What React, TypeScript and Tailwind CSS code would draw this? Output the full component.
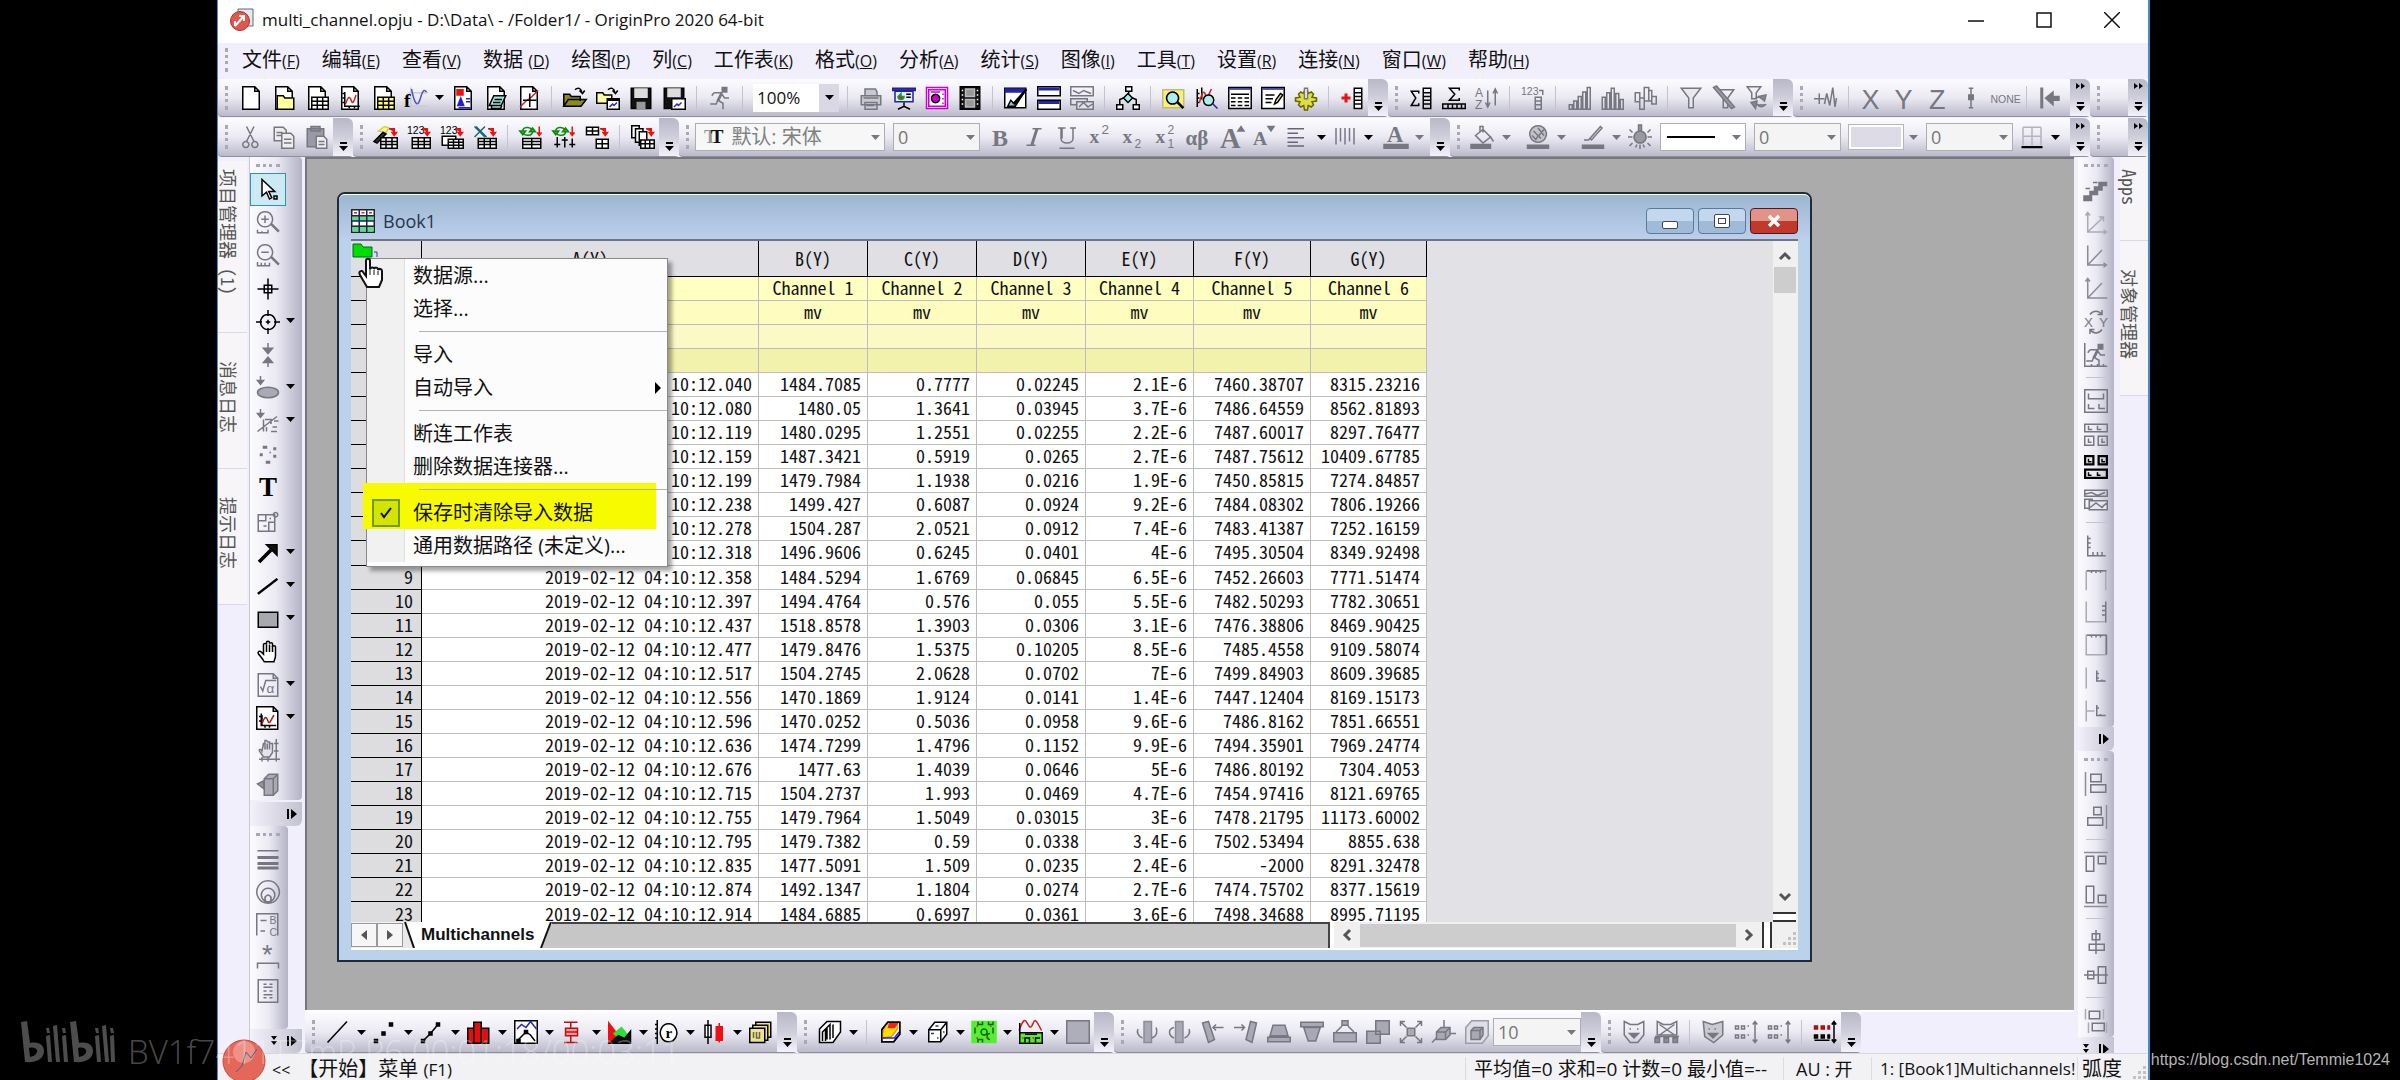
import { Fragment, type ReactNode } from 'react'
import clsx from 'clsx'

// One toolbar drawing on a 16x16 grid: paths are [d, fill, stroke], labels are { t, x, y, s }
type Shape = [string, string?, string?] | { t: string; x: number; y: number; s: number; serif?: boolean }

const PAGE: Shape = ['M2.5 .5h8l3 3v12h-11zM10.5 .5v3h3', '#fff']
const GRID = 'M4.5 7.5h11v8h-11zM4.5 10.2h11M4.5 12.8h11M8.2 7.5v8M11.8 7.5v8'
const ARROW_RED: Shape = ['M10 2.5h3.500v2.500M12 5l1.500 2 1.500-2z', '#e11', '#e11']
const RUNNER: Shape[] = [
  ['M9.5 1h3v3h-3z', 'currentColor'],
  ['M4 4.5h5l-2.5 5 3.5 2v4M9 5l2 3h3M6.5 9.5l-1 2.5h-4M4 4.5l-1.5 2M8.5 5l-2.5 5M9.5 5l-2.5 5'],
]
const CUBE = 'M2.5 6.5l4-5h8v8l-4 5h-8z'

const icons: Record<string, Shape[]> = {
  newProject: [PAGE],
  newFolder: [PAGE, ['M3.5 15.5v-9h4l1 1.5h6v7.5z', '#ffffa0']],
  newBook: [PAGE, [GRID, '#fff']],
  newGraph: [PAGE, ['M4.5 4v9.5h10M3 5h1.5M3 8h1.5M3 11h1.5M7.5 15v-1.5M11 15v-1.5'], ['M5 12c2-6 3-5 4-2s2-1 3-4', 'none', '#c22']],
  newMatrix: [PAGE, [GRID, '#ffff70']],
  newFunction: [['M3 4.5h13M3 13.5h13M4.5 1v14', 'none', '#ccc'], ['M5 2c2 10 4 13 6 6s3-5 4-4', 'none', '#55b'], { t: 'f', x: 0, y: 14, s: 13, serif: true }],
  newLayout: [PAGE, ['M4 2.5h4v3.5h-4z', '#e11', '#e11'], ['M4.5 13l2-5 2 5z', '#22c', '#22c'], ['M10 8.5h3M10 10.5h3M5 14.5h8', 'none', '#22c']],
  newNotes: [PAGE, ['M6.5 6.5h8l-3 6.5h-8zM5 13v2h6l1-2M7 9h5M6 11h5', '#9fe6dd']],
  newImage: [PAGE, ['M2 14l4-4 3-2 5-5', 'none', '#c22'], ['M8.5 5v9M4 9.5h9']],
  open: [['M.5 13.5v-8h4l1 1.5h6v3M.5 13.5l3-4.5h12l-3.5 4.5z', '#8a8a20'], ['M8 2.5c2-2 4-1 4.5 1.5M11 3l2 2 1.5-2']],
  openTemplate: [['M.5 11.5v-7h4l1 1.5h5v5.5z', '#ffffa0'], ['M7.5 8.5h8v7h-8zM7.5 9.5h8', '#fff'], ['M9 14l2-2 1 1 2-2', 'none', '#22c'], ['M8 2.5c2-2 4-1 4.5 1.5M11 3l2 2 1.5-2']],
  save: [['M1.5 1.5h13v13.5h-13z', '#111'], ['M4 2h8v5.5h-8z', '#ddd', '#ddd'], ['M5.5 11h5v4h-5z', '#999', '#999']],
  saveTemplate: [['M1.5 1.5h13v13.5h-13z', '#111'], ['M4 2h8v5h-8z', '#ddd', '#ddd'], ['M6.5 8.5h9v7h-9z', '#fff'], ['M8 14l2-2 1 1 2-2', 'none', '#22c']],
  slide: [['M.5 1.5h15v1.5h-15z', '#33a', '#229'], ['M2 3.5h12v7h-12z', '#def', '#229'], ['M4 7a2 2 0 1 0 4 0h-2v-2z', '#c22', '#292'], ['M9.5 5.5h3M9.5 7.5h3M8 11v3M4 15.5l4-2 4 2']],
  project: [['M1 1h14v14h-14z', '#fff', '#c0c'], ['M2.5 2.5h11v11h-11z', '#fff', '#c0c'], ['M7 5.5a2.8 2.8 0 1 0 .1 0z', '#c0c'], ['M4 4h6M12 5v1M12 8v1M12 11v1', 'none', '#c0c']],
  video: [['M1.5 .5h13v15h-13z', '#111'], ['M5 2h6v5h-6zM5 9h6v5h-6z', '#999', '#bbb'], ['M2.5 3h1M2.5 6h1M2.5 9h1M2.5 12h1M12.5 3h1M12.5 6h1M12.5 9h1M12.5 12h1', 'none', '#fff']],
  codeBuilder: [['M.5 1.5h14v13h-14z', '#fff'], ['M1 2h13v2h-13z', '#22a', '#22a'], ['M2.5 13.5l2-4 2 2 8-9-7 11z', '#8cc'], ['M6 12l9-10M7 12.5l8-10']],
  tiles: [['M.5 .5h15v6h-15zM.5 9.5h15v6h-15z', '#fff'], ['M1 1.5h14M1 2.5h14M1 10.5h14M1 11.5h14', 'none', '#22a']],
  tree: [['M6.5 .5h4v3h-4zM.5 12.5h4v3h-4zM11.5 12.5h4v3h-4z', '#fff'], ['M8 5l3 3-3 3-3-3z', '#9ee'], ['M8.5 3.5v1.5M5 8l-2.5 1v3M11 8l2.5 1v3']],
  zoomSheet: [['M.5 2.5h14v12h-14z', '#ffef70', '#bb8'], ['M7 4a4 4 0 1 0 .1 0z', '#aee'], ['M10 11l4 4M10.5 10.5l4 4']],
  zoomGraph: [['M1.5 2v12M1 5h2M1 8h2M1 11h2M4.5 1v8'], ['M3 11c2-8 3-8 4-5s2 0 4-4', 'none', '#c22'], ['M9 6a3.5 3.5 0 1 0 .1 0z', '#aee'], ['M12 12l3 3', 'none', '#229']],
  results: [['M.5 1h15v14h-15z', '#fff'], ['M1 2h14', 'none', '#22a'], ['M2 5.5h12M2 8h3M6.5 8h3M11 8h3M2 10.5h3M6.5 10.5h3M11 10.5h3M2 13h3M6.5 13h3M11 13h3']],
  script: [['M.5 1h15v14h-15z', '#fff'], ['M1 2h14', 'none', '#22a'], ['M3 6h6M3 8.5h5M3 11h4'], ['M9 12l1-3 3-4 1.5 1-3.5 5z', '#ee5']],
  gear: [['M7 3h2l.5 2 2-1L13 5.500l-1 2 3 .5v2l-3 .5 1 2-1.500 1.500-2-1-.5 3H7l-.5-3-2 1L3 12.500l1-2-3-.5V8l3-.5-1-2L4.500 4l2 1z', '#dd4', '#660'], ['M7 1.500h2v7h-2z', '#fff', '#777']],
  addColumn: [['M1 8h6M4 5v6M1 7.5h6M3.5 5v6M4.5 5v6M1 8.5h6', 'none', '#e11'], ['M9.5 1.5h5v13.5h-5zM9.5 4.5h5M9.5 7h5M9.5 9.5h5M9.5 12h5', '#fff']],
  sumColumns: [['M6.5 5v-1.5h-5l3 4.5-3 5h5v-1.5M9.5 1.5h5v13.5h-5zM9.5 4.5h5M9.5 7h5M9.5 9.5h5M9.5 12h5']],
  sumRows: [['M11.5 3v-1.5h-6.5l3.5 4-3.5 4h6.5v-1.5M.5 12h15v3h-15zM4 12v3M7 12v3M10 12v3M13 12v3']],
  importWizard: [['M3 4l4-3 3 1-2 3z', '#ffff70', '#cc6'], ['M0 11l6-6 2 1-6 6z', '#333'], ['M4.5 8.5h11v7h-11zM4.5 11h11M4.5 13h11M8 8.5v7M12 8.5v7', '#fff'], ARROW_RED],
  importAscii: [{ t: '123', x: 0, y: 6, s: 7 }, ['M3.5 8.5h12v7h-12zM3.5 11h12M3.5 13h12M7.5 8.5v7M11.5 8.5v7', '#fff'], ARROW_RED],
  importMultiple: [{ t: '123', x: 0, y: 6, s: 7 }, ['M1.5 7.5h9v6h-9z', '#fff'], ['M5.5 9.5h10v6h-10zM5.5 11.5h10M5.5 13.5h10M9 9.5v6M12.5 9.5v6', '#fff'], ARROW_RED],
  importExcel: [['M1 1l7 7M8 1l-7 7M2 1l7 7', 'none', '#186a7a'], ['M3.5 9h12v6.5h-12zM3.5 11h12M3.5 13h12M7.5 9v6M11.5 9v6', '#fff'], ARROW_RED],
  reimport: [['M2.500 4c0-3 5-3 6-1M9 4.500c0 3-5 3-6 1', 'none', '#181'], ['M.5 4h4l-2 2.500zM7 4.500h4l-2-2.500z', '#2b2', '#181'], ['M2.5 9h12v6.5h-12zM2.5 11h12M2.5 13h12M8.5 9v6', '#fff'], ['M13.5 1v6M12 5l1.5 2 1.5-2', '#e11', '#e11']],
  recalc: [['M2.500 4c0-3 5-3 6-1M9 4.500c0 3-5 3-6 1', 'none', '#181'], ['M.5 4h4l-2 2.500zM7 4.500h4l-2-2.500z', '#2b2', '#181'], ['M3.5 8v7M8.5 8v7M13.5 9v6M1.5 13h4M6.5 10h4M11.5 13h4'], ['M13.5 1v6M12 5l1.5 2 1.5-2', '#e11', '#e11']],
  cloneImport: [['M1 1.5h8v5h-8zM1 4h8M5 1.5v5', '#fff'], ['M7.5 9.5h8v6h-8zM7.5 12.5h8M11.5 9.5v6', '#fff'], ARROW_RED],
  batch: [['M.5 .5h5v8h-5z', '#fff'], ['M3 2.5h5v9h-5z', '#fff'], ['M5.5 4.5h5v9h-5z', '#fff'], ['M6.5 10h9v5.5h-9zM6.5 12.5h9M9.5 10v5M12.5 10v5', '#fff'], ARROW_RED],
  pointer: [['M4 1v11l3-2.5 2 4.5 1.5-.8-2-4.2h4z', '#fff'], ['M12 12h2v2h-2z']],
  reader: [['M8 1v14M1 8h14M5.5 5.5h5v5h-5z']],
  target: [['M8 3a5 5 0 1 0 .1 0zM8 0v4M8 12v4M0 8h4M12 8h4M6.500 8h3M8 6.500v3']],
  text: [{ t: 'T', x: 2, y: 14, s: 18, serif: true }],
  arrowTool: [['M2 14L10 6M1.5 13.5L9.5 5.5M2.5 14.5L10.5 6.5'], ['M7 2.5h7v7z', '#111']],
  line: [['M1 13L14 3M1.5 13.5L14.5 3.5']],
  rect: [['M1.5 3.5h13v10h-13z', '#a8a8b0']],
  hand: [['M5.5 14.500c-1-2-3-4-4-5.500-.5-1.500 1-2 2-1l1.500 1.500v-6.500c0-1 2-1 2 0v-1.500c0-1 2-1 2 0v1c0-1 2-1 2 0v2c0-1 2-1 2 0v6c0 2-1 3-1 4z', '#fff'], ['M7 8V3M9 8V3M11 8V4']],
  insertGraph: [['M.5 .5h11l3 3v12h-14zM11.5 .5v3h3', '#fff'], ['M3.5 5v8h10M2 7h1.5M2 10h1.5M6 13v1.5M9 13v1.5M4 6v7'], ['M4 12c2-6 3-5 4-2s2-1 4-4', 'none', '#a22']],
  lockedMerge: [['M.5 .5h6v6h-6zM9.5 .5h6v6h-6zM.5 9.5h15v6h-15zM3 2.5v2h2M12 2.5v2h2M3 11.5v2h2M9 11.5v2h2M1 1h5v5h-5zM10 1h5v5h-5zM1 10h14v5h-14z']],
  linePlot: [['M1 15L14 1']],
  scatter: [['M1 13h2v2h-2zM6 8h2v2h-2zM11 2h2v2h-2z', '#111']],
  lineSymbol: [['M2 14L7 9 12 3'], ['M1 13h2v2h-2zM6 8h2v2h-2zM11 2h2v2h-2z', '#111']],
  columnPlot: [['M.5 15.5v-10h4v-4h5v4h5v10zM4.5 5v10M9.5 5v10', '#d11']],
  multiPlot: [['M.5 .5h15v15h-15z', '#fff'], ['M2 6l3-3 3 2 3-4 4 5', 'none', '#22c'], ['M2 14l6-6 3 2 3 4'], ['M7 7h2v2h-2zM2 13h2v2h-2z', '#111']],
  boxPlot: [['M2 1.5h9M6.5 1.5v4M3 5.5h8v5h-8zM3 8h8M6.5 10.5v4M2 15h9', '#f99', '#b11']],
  areaPlot: [['M.5 15v-13l7 9v4z', '#e11', '#e11'], ['M4 9l5-4 4 5-3 5z', '#3d3', '#3d3'], ['M1 15.5l6-5 4 2 4-5v8z', '#111']],
  polar: [['M1.5 0v16M1 3h-1M1 6h-1M1 9h-1M1 12h-1M9 2.5a5.5 6 0 1 0 .1 0z', '#fff'], { t: 'r', x: 7, y: 12, s: 10, serif: true }],
  stock: [['M4 0v16M2 3.5h4v8h-4z', '#fff'], ['M11.5 2v13M9.5 4.5h4v9h-4z', '#e11', '#e11']],
  template: [['M4.5 3.5v-2h10v10h-2M2.5 5.5v-2h10v10h-2M.5 5.5h10v9.5h-10z', '#eee38a'], ['M3 8v4M5 8v4h2v-4', 'none', '#665']],
  wall3d: [['M1 15V6l5-5h9v7l-5 7z', '#fff'], ['M3 14V8l2-2v8M6 13V5l2-2v10M10 12V3']],
  surface: [[CUBE, '#fff'], ['M3 9l2-6 8-1v4l-4 5-6 1z', '#fd0', '#e92'], ['M8 2h5l-2 3h-4z', '#e22', '#e22'], ['M3 12h8l3-4', 'none', '#22c'], [CUBE]],
  scatter3d: [[CUBE, '#fff'], ['M2.5 6.5h8v8M10.5 6.5l4-5'], ['M4 9h2M8 12h1M7 4h2M12 8h1', 'none', '#22c']],
  contour: [['M0 1h16v14h-16z', '#5e3', '#5e3'], ['M4 1v2h3v-2M11 1v2h3v-2M2 5v4M14 5v4M8 6a2 2 0 1 0 .1 0zM4 15v-2h3v2M12 9a2 2 0 0 0 0 4', 'none', '#161'], ['M3 4h1M12 4h1M3 12h1M10 12h1', 'none', '#e11']],
  profile: [['M0 7c3-8 4-8 6-4s3 0 4-2 3 2 5 6', 'none', '#c22'], ['M.5 8.5h15v7h-15z', '#5e3'], ['M.5 2v7M4 9.5h8M4 15v-3h3v3M11 15v-3h3'], ['M2 12h1M9 12h1', 'none', '#e11']],
  maskRange: [['M1 4h2v2h-2zM5.5 4h2v2h-2zM10 4h1v2h-1z', '#a11', '#a11'], ['M1 10h2v2h-2zM5.5 10h2v2h-2zM10 10h1v2h-1zM1 13.5h10M14 1v14M12.5 3l1.5-2 1.5 2M12.5 13l1.5 2 1.5-2', '#111']],
  alignText: [['M1 2.5h11M1 5.5h7M1 8.5h11M1 11.5h7M1 14h11', 'none', '#667']],
  bars: [['M2 2v11M5 2v9M8 2v11M11 2v9M14 2v11', 'none', '#778']],
  border: [['M2 1.5h12M2 7.5h12M2 1.5v12M8 1.5v12M14 1.5v12', 'none', '#b4b4c0'], ['M1 15h14M1 14.5h14']],
}

// Greyed out commands
const dimIcons: Record<string, Shape[]> = {
  run: RUNNER,
  print: [['M4 6v-4h7l1 2v2M1.5 6.5h13v6h-13zM4 11h8v4.5h-8z', '#c8c8d0'], ['M3 8h10M5 13h5']],
  duplicate: [['M.5 .5h15v6h-15zM2 3l4 2 3-2 5 2M.5 8.5h11v4h-11z'], ['M4.5 10.5h11v5h-11zM6 14l3-3 3 3 3-2', '#e0e0e8']],
  sort: [{ t: 'A', x: 0, y: 7, s: 8 }, { t: 'Z', x: 0, y: 15, s: 8 }, ['M8.5 3v10M7 11l1.5 3 1.5-3M13.5 3v10M12 5l1.5-3 1.5 3']],
  rowNumbers: [{ t: '123', x: 0, y: 6, s: 7 }, ['M12 3h2.5v3M9.5 7.5h4v8h-4zM9.5 10h4M9.5 12.5h4']],
  sortAsc: [['M1.5 12.5h2v3h-2zM4.5 10h2v5.5h-2zM7.5 7h2v8.5h-2zM10.5 4h2v11.5h-2zM13.5 1h2v14.5h-2z']],
  histogram: [['M1.5 7.5h2v8h-2zM4.5 4.5h2v11h-2zM7.5 1.5h2v14h-2zM10.5 5h2v10.5h-2zM13.5 9h2v6.5h-2z']],
  floating: [['M1.5 4.5h3v6h-3zM4.5 8h3v7.5h-3zM7.5 1h3v9h-3zM10.5 3h2v7h-2zM12.5 7h3v5h-3z']],
  filter: [['M1.5 1.5h13l-5 6.5v6.5h-3v-6.5z', '#e8e8ee']],
  filterOff: [['M3.5 2.5h11l-4 5.5v6.5h-3v-6.5z'], ['M1 1l2-1 12 14-2 1z', '#9999a4']],
  filterRefresh: [['M1.5 .5h9l-3 4v4h-3v-4z'], ['M9 7l5-1-1 4zM4 11l4-1-1 5zM8 12c2 3 5 2 6 0M7 8l4-1', '#888894']],
  addPlot: [['M0 8.5h7M3.5 5v7M7 12l1.5-7 2 8 2-12 1.5 13 1-6']],
  setX: [{ t: 'X', x: 1, y: 15, s: 18 }],
  setY: [{ t: 'Y', x: 1, y: 15, s: 18 }],
  setZ: [{ t: 'Z', x: 2, y: 15, s: 18 }],
  yError: [['M8 1v14M6.5 1.5h3M6.5 14.5h3M6.5 6h3v3h-3z', '#777782']],
  none: [{ t: 'NONE', x: -1, y: 11, s: 7 }],
  moveFirst: [['M2 1v14M3 1v14'], ['M5 8l5-4v3h4v2.5h-4v3z', '#777782']],
  cut: [['M5 1l5 10M10 1l-5 10M4.5 11a2 2 0 1 0 .1 0zM10.5 11a2 2 0 1 0 .1 0z']],
  copy: [['M1.5 1.5h6l2 2v7h-8zM3 5h4M3 7h4', '#eee'], ['M6.5 5.5h6l2 2v8h-8zM8 9.5h5M8 12h5', '#eee']],
  paste: [['M1.5 2.5h11v12h-11zM4 1h6v3h-6z', '#9a9aa6'], ['M7.5 7.5h5l2 2v6h-7zM9 11h4M9 13h4', '#eee']],
  bold: [{ t: 'B', x: 2, y: 14, s: 16, serif: true }],
  italic: [['M7 2.5h6M3 13.5h6M10 2.5l-3.5 11M9.5 2.5l-3.5 11M10.5 2.5l-3.5 11']],
  underline: [['M2 2h5M10 2h4M4 2v7c0 4 8 4 8 0v-7M4.7 2v7M3 15.5h10']],
  superscript: [{ t: 'x', x: 1, y: 12, s: 13, serif: true }, { t: '2', x: 9, y: 6, s: 9 }],
  subscript: [{ t: 'x', x: 1, y: 12, s: 13, serif: true }, { t: '2', x: 9, y: 15, s: 8 }],
  supersub: [{ t: 'x', x: 1, y: 12, s: 13, serif: true }, { t: '2', x: 9, y: 6, s: 8 }, { t: '1', x: 9, y: 15, s: 8 }],
  greek: [{ t: 'αβ', x: -1, y: 13, s: 14, serif: true }],
  fontUp: [{ t: 'A', x: 0, y: 15, s: 19, serif: true }, ['M12 4l2-3 2 3z', '#777782']],
  fontDown: [{ t: 'A', x: 0, y: 13, s: 13, serif: true }, ['M10 1l2 3 2-3z', '#777782']],
  fontColor: [{ t: 'A', x: 2, y: 11, s: 15, serif: true }, ['M0 13h16v2.5h-16z', '#777782']],
  fillColor: [['M3 7l5-4 5 5-5 4zM6 5v-4h2v4'], ['M13 8l2 3M0 13h13v2.5h-13z', '#777782']],
  patternColor: [['M8 .5a5.5 5.5 0 1 0 .1 0zM5 4l5 5M8 2l4 5M4 7l3 3M12 3l-6 7', '#c2c2cc'], ['M1 13.5h14v2h-14z', '#777782']],
  lineColor: [['M2 10h3l8-9M6 9l7-8 1 1-7 8z'], ['M1 13.5h14v2h-14z', '#777782']],
  light: [['M8 4a4 4 0 1 0 .1 0zM7 0h2v4h-2z', '#9999a4'], ['M1 3l2 2M15 3l-2 2M0 8h3M13 8h3M1 14l2-2M15 14l-2-2M8 13v3M5 15l1-2M11 15l-1-2']],
  zoomIn: [['M6 .5a5 5 0 1 0 .1 0zM3.5 5.5h5M6 3v5M1 12.5v2h3v-1M4 14.5h4v-2M10 9l5 5M10.5 8.5l5 5']],
  zoomOut: [['M6 .5a5 5 0 1 0 .1 0zM3.5 5.5h5M1 12v2.5h8v-2M3.5 12.5v2M6 12.5v2M10 9l5 5M10.5 8.5l5 5']],
  dataCursor: [['M8 0v4M8 16v-4'], ['M5 3.5l3 3.5 3-3.5zM5 13l3-3.5 3 3.5z', '#777782']],
  region: [['M1 11a7 3.5 0 1 0 14 0a7 3.5 0 1 0-14 0z', '#aaaab4'], ['M3 0v4M1 3l2 2.5 2-2.5z', '#777782']],
  maskPoints: [['M3 0v4M1 3l2 2.5 2-2.5z', '#777782'], ['M1 15L14 5M6 7h4v3M12 8h3M7 15v-3M11 12h3M10 15h4M5 7v8']],
  dots: [['M5 3h2v1h-2zM12 4h1v1h-1zM3 8h1v1h-1zM12 9h1v1h-1zM7 13h2v1h-2zM9 7h1', '#777782']],
  regionBox: [['M1.5 4.5h11v11h-11zM6.5 4.5v4h-5M12.5 9.5h-4v6M5 12h2M9 7h1M13 3a1.5 1.5 0 1 0 .1 0z']],
  equation: [['M1.5 .5h10l3 3v12h-13zM11.5 .5v3h3M3 9l1.5 3 2-7h7'], { t: 'α', x: 7, y: 13, s: 9 }],
  rescale: [['M13.5 0v15M2 13.5h14M12 3h3M12 8h3M4 12v3M8 12v3'], ['M3 9c-2-2 0-3 1-1l1-5h1v-2h1l1 1h1v1h2v6l-2 3h-4zM6 7v-4M7.500 7v-4M9 7v-4', '#e4e4ea']],
  rotate3d: [['M5.5 4.5h6v11h-6zM5.5 4.5l3-3h6v11l-3 3M11.5 4.5l3-3', '#aaaab4'], ['M5 6l-4 2 4 3z', '#999']],
  layers: [['M1 2.5h14M1 6.5h14M1 7.5h14M1 10.5h14M1 11.5h14M1 13.5h14M1 14.5h14']],
  rings: [['M8 .5a7.5 7.5 0 1 0 .1 0zM8 5.5a4.5 4.5 0 1 0 .1 0zM8 10a2 2.5 0 1 0 .1 0zM6 15v-4M10 15v-4']],
  legend: [['M.5 15v-14.5h14v14.5M3 5h4M3 12h3'], { t: 'B', x: 9, y: 7, s: 7 }, { t: 'C', x: 9, y: 15, s: 7 }],
  asterisk: [{ t: '*', x: 4, y: 12, s: 18 }, ['M1 15v-3.5h14v3.5']],
  grid: [['M1.5 .5h13v15h-13z'], ['M5 3.5h2M9 3.5h2M5 8h2M9 8h2M5 12.5h2M9 12.5h2M5 5.5h6M5 10.5h6']],
  stairs: [['M0 12h5v3h-5zM4 9h5v2h-5zM7 6h5v2h-5zM10 3h5v2h-5z', '#777782'], ['M1 7h3M6 3h3']],
  axes3d: [['M2.5 1v13h13M2.5 14L13 4M1 3l1.5-2 1.5 2M13 12.5l2 1.5-2 1.5M10 4h3v3', 'none', '#aaaab4']],
  axes2: [['M2.5 1v13h13M2.5 14L12 4M13 12.5l2 1.5-2 1.5', 'none', '#8c8c96']],
  axes1: [['M2.5 1v13h13M2.5 14L12 4M1 3l1.5-2 1.5 2', 'none', '#8c8c96']],
  swapXY: [{ t: 'X', x: 0, y: 11, s: 9 }, { t: 'Y', x: 10, y: 11, s: 9 }, ['M4 3c2-3 6-3 8 0M12 0v3h-3M12 13c-2 3-6 3-8 0M4 16v-3h3']],
  speed: [...RUNNER, ['M.5 0v15.5h15M5 15v-1M9 15v-1M13 15v-1']],
  layer1: [['M.5 .5h15v15h-15zM3 3v3.5h10v-3.500M3 10v3h4M10 10v3h4']],
  layer4: [['M.5 1.5h15v5h-15zM3 2.5v2.5h2.5M9 2.5v2.5h2.5M.5 9.5h6v6h-6zM9.5 9.5h6v6h-6zM3 11v2.5h2M12 11v2.5h2']],
  extract: [['M.5 1.5h15v4h-15zM1 4l4-1 4 2 5-2M.5 7.5h5v6h-5z'], ['M3.5 8.5h12v6h-12zM4 13l4-3 4 3 3-3', '#e8e8f0']],
  frameL: [['M2.5 1v13.5h12M2.5 3h2M2.5 6h2M2.5 9h2M6 14v-2M9 14v-2M12 14v-2']],
  frameT: [['M1.5 2.5h13M1.5 2.5v13M14.5 2.5v13', 'none', '#aaaab4'], ['M2 2.5h13M5 3v1M8 3v1M11 3v1']],
  frameR: [['M1.5 1v13.5h13', 'none', '#aaaab4'], ['M14.5 1v14M14 4h-2M14 7h-2M14 10h-2']],
  frameB: [['M1.5 1.5h13v13h-13z', 'none', '#aaaab4'], ['M2 1.5h13v13M5 2v1M8 2v1M11 2v1']],
  frameC: [['M1.5 1v14', 'none', '#aaaab4'], ['M8.5 3v7h6M8 5h2M8 8h2M12 10v-1']],
  frameD: [['M1.5 1v14M1 8h6', 'none', '#aaaab4'], ['M8.5 4v7h6M8 6h2M11 11v-1']],
  alignL: [['M1 0v16', 'none', '#8c8c96'], ['M4.5 1.5h7v5h-7zM4.5 8.5h10v5h-10z']],
  alignR: [['M15 0v16', 'none', '#8c8c96'], ['M6.5 1.5h5v5h-5zM2.5 8.5h10v5h-10z']],
  alignT: [['M0 1h16', 'none', '#8c8c96'], ['M1.5 3.5h5v10h-5zM9.5 3.5h5v5h-5z']],
  alignB: [['M0 15h16', 'none', '#8c8c96'], ['M1.5 1.5h5v11h-5zM9.5 7.5h5v5h-5z']],
  alignV: [['M8 0v16M5.5 2.5h5v4h-5zM3.5 9.5h10v4h-10z']],
  alignH: [['M0 8h16M2.5 5.5h4v5h-4zM9.5 2.5h5v11h-5z']],
  distribute: [['M3.5 1.5h7v5h-7zM5.5 9.5h8v5h-8z'], ['M1 0v7M13 0v7M3 9v7M15 9v7', 'none', '#aaaab4']],
  blank: [['M.5 .5h15v15h-15z', '#aeaebb']],
  rotL: [['M6 1h5v14h-5z', '#a9a9b6', '#8c8c99'], ['M11 12c4-1 4-5 3-7M5 12c-3-1-4-4-3-6']],
  rotR: [['M5 1h5v14h-5z', '#a9a9b6', '#8c8c99'], ['M4 12c-4-2-4-6 0-7M11 12c3-1 4-4 3-6']],
  tiltL: [['M1 2l4-1 4 12-4 2z', '#a9a9b6'], ['M8 5h7M10 3l-2 2 2 2']],
  tiltR: [['M15 2l-4-1-3 12 4 2z', '#a9a9b6'], ['M0 5h7M5 3l2 2-2 2']],
  tiltUp: [['M4 3.5h8l2 7h-12zM.5 11.5h15v3h-15z', '#a9a9b6']],
  tiltDown: [['M.5 1.5h15v3h-15zM2.5 5h11l-3 9h-5z', '#a9a9b6']],
  widen: [['M.5 8.5h15v6h-15zM6 .5h4v3h-4z', '#a9a9b6'], ['M6 4l-4 4M10 4l4 4']],
  overlap: [['M6.5 .5h9v9h-9zM.5 7.5h9v8h-9z', '#a9a9b6']],
  expand: [['M5.5 5.5h5v5h-5z', '#a9a9b6'], ['M1 1l4 4M15 1l-4 4M1 15l4-4M15 15l-4-4M1 4v-3h3M12 1h3v3M1 12v3h3M15 12v3h-3']],
  cubeAxes: [['M3 8l3-3h6v5l-3 3h-6z', '#a9a9b6'], ['M3 8h6l3-3M9 8v5M8 0v5M12 9h4M0 15l3-3']],
  cubeFrame: [['M.5 5l4-4.5h11v10l-4 5h-11z', '#dedee6', '#9c9ca8'], ['M4 7l2-2h6v5l-2 3h-6z', '#a9a9b6'], ['M4 7h6l2-2M10 7v6']],
  maskA: [['M1.5 1l4 2h5l4-2v9l-4 5h-5l-4-5zM5 6h1M10 6h1'], ['M5 9h6l-3 3z', '#777782']],
  maskB: [['M1.5 1l4 2h5l4-2v9h-13zM3 3l10 7M13 3l-10 7'], ['M0 12h3v3h-3zM6 12h3v3h-3zM12 12h3v3h-3zM0 11h16', '#8c8c96']],
  maskC: [['M1.5 1l6 2 7-2v9l-6 5-6-4z', '#c9c9d2'], ['M5 6h1M9 6h1M5 9h6l-3 3z', '#777782']],
  maskD: [['M1 4h2v2h-2zM5 4h2v2h-2zM1 10h2v2h-2zM5 10h2v2h-2zM9 4h1M9 10h1M14 1v14M12.5 3l1.5-2 1.5 2M12.5 13l1.5 2 1.5-2']],
}

function Glyph({ name }: { name: string }) {
  const shapes = icons[name] ?? dimIcons[name] ?? []
  return (
    <svg viewBox="0 0 16 16" className="size-6 shrink-0 overflow-visible" fill="none" stroke="currentColor" aria-hidden="true">
      {shapes.map((s, i) =>
        Array.isArray(s) ? (
          <path key={i} d={s[0]} fill={s[1] ?? 'none'} stroke={s[2] ?? 'currentColor'} />
        ) : (
          <text
            key={i}
            x={s.x}
            y={s.y}
            fontSize={s.s}
            fill="currentColor"
            stroke="none"
            fontWeight={s.serif ? 700 : 400}
            fontFamily={s.serif ? 'Liberation Serif, serif' : 'Liberation Sans, sans-serif'}
          >
            {s.t}
          </text>
        )
      )}
    </svg>
  )
}

function Caret({ dim = false }: { dim?: boolean }) {
  return (
    <svg viewBox="0 0 9 5" className={clsx('h-[5px] w-[9px] shrink-0', dim ? 'text-[#777782]' : 'text-black')} aria-hidden="true">
      <path d="M0 0h9l-4.5 5z" fill="currentColor" />
    </svg>
  )
}

function Grip({ vertical = false }: { vertical?: boolean }) {
  return (
    <span className={clsx('flex shrink-0 items-center justify-center', vertical ? 'h-4 w-9' : 'h-full w-4')}>
      <span
        className={clsx(
          'border-[#a9a8b6]',
          vertical ? 'w-6 border-t-[3px] border-dotted' : 'h-6 border-l-[3px] border-dotted'
        )}
      />
    </span>
  )
}

// '|' is a separator, a trailing '>' adds the drop-down arrow
function Tools({ items, vertical = false }: { items: string[]; vertical?: boolean }) {
  return (
    <>
      {items.map((item, i) => {
        if (item === '|') {
          return vertical ? (
            <span key={i} className="flex h-[13px] w-9 shrink-0 items-center justify-center">
              <span className="w-5 border-t border-[#c3c2d0]" />
            </span>
          ) : (
            <span key={i} className="flex w-[13px] shrink-0 justify-center">
              <span className="h-6 border-l border-[#c3c2d0]" />
            </span>
          )
        }
        const name = item.replace('>', '')
        const dim = name in dimIcons
        const active = name === 'pointer'
        return (
          <Fragment key={i}>
            <button
              type="button"
              aria-label={name}
              className={clsx(
                'flex h-[33px] shrink-0 items-center justify-center',
                vertical ? 'w-9' : 'w-[33px]',
                dim ? 'text-[#777782]' : 'text-black',
                active && 'border border-[#2f93ab] bg-[#cde9f4]'
              )}
            >
              <Glyph name={name} />
              {vertical && item.endsWith('>') && (
                <span className="relative">
                  <span className="absolute -top-1 left-1.5">
                    <Caret />
                  </span>
                </span>
              )}
            </button>
            {!vertical && item.endsWith('>') && (
              <span className="flex w-[14px] shrink-0 justify-center">
                <Caret dim={dim} />
              </span>
            )}
          </Fragment>
        )
      })}
    </>
  )
}

function Overflow({ more = false }: { more?: boolean }) {
  return (
    <button
      type="button"
      aria-label="toolbar options"
      className="flex w-5 shrink-0 flex-col items-center justify-end self-stretch rounded-tr-md bg-linear-to-b from-[#b9b8c8] via-[#cfcedb] to-[#f3f2fb] pb-1"
    >
      <svg viewBox="0 0 9 32" className="h-8 w-[9px]" aria-hidden="true">
        {more && <path d="M0 3l4 3-4 3zM5 3l4 3-4 3z" />}
        <path d="M1 22h7v2h-7zM0 26h9l-4.5 5z" />
      </svg>
    </button>
  )
}

function Segment({ children, more, grow }: { children?: ReactNode; more?: boolean; grow?: boolean }) {
  return (
    <div
      className={clsx(
        'flex h-full items-center rounded-b-sm border-b border-[#8f8e9e] bg-linear-to-b from-[#fcfcff] via-[#ebeaf3] to-[#bbbaca]',
        grow ? 'grow justify-between' : 'shrink-0'
      )}
    >
      <Grip />
      {children}
      <Overflow more={more} />
    </div>
  )
}

function Combo({ value, label, className }: { value: string; label: string; className: string }) {
  return (
    <span className={clsx('relative flex h-7 shrink-0 items-center border border-[#adadb5] bg-[#f4f4f4]', className)}>
      <select aria-label={label} className="h-full w-full appearance-none bg-transparent px-1 text-[18px] leading-5 text-[#777]">
        <option>{value}</option>
      </select>
      <span className="pointer-events-none absolute right-1">
        <Caret dim />
      </span>
    </span>
  )
}

const menus = [
  ['文件', 'F'], ['编辑', 'E'], ['查看', 'V'], ['数据 ', 'D'], ['绘图', 'P'], ['列', 'C'], ['工作表', 'K'], ['格式', 'O'],
  ['分析', 'A'], ['统计', 'S'], ['图像', 'I'], ['工具', 'T'], ['设置', 'R'], ['连接', 'N'], ['窗口', 'W'], ['帮助', 'H'],
]

const columns = [
  { name: 'B(Y)', long: 'Channel 1' },
  { name: 'C(Y)', long: 'Channel 2' },
  { name: 'D(Y)', long: 'Channel 3' },
  { name: 'E(Y)', long: 'Channel 4' },
  { name: 'F(Y)', long: 'Channel 5' },
  { name: 'G(Y)', long: 'Channel 6' },
]

const rows = [
  ['12.040', '1484.7085', '0.7777', '0.02245', '2.1E-6', '7460.38707', '8315.23216'],
  ['12.080', '1480.05', '1.3641', '0.03945', '3.7E-6', '7486.64559', '8562.81893'],
  ['12.119', '1480.0295', '1.2551', '0.02255', '2.2E-6', '7487.60017', '8297.76477'],
  ['12.159', '1487.3421', '0.5919', '0.0265', '2.7E-6', '7487.75612', '10409.67785'],
  ['12.199', '1479.7984', '1.1938', '0.0216', '1.9E-6', '7450.85815', '7274.84857'],
  ['12.238', '1499.427', '0.6087', '0.0924', '9.2E-6', '7484.08302', '7806.19266'],
  ['12.278', '1504.287', '2.0521', '0.0912', '7.4E-6', '7483.41387', '7252.16159'],
  ['12.318', '1496.9606', '0.6245', '0.0401', '4E-6', '7495.30504', '8349.92498'],
  ['12.358', '1484.5294', '1.6769', '0.06845', '6.5E-6', '7452.26603', '7771.51474'],
  ['12.397', '1494.4764', '0.576', '0.055', '5.5E-6', '7482.50293', '7782.30651'],
  ['12.437', '1518.8578', '1.3903', '0.0306', '3.1E-6', '7476.38806', '8469.90425'],
  ['12.477', '1479.8476', '1.5375', '0.10205', '8.5E-6', '7485.4558', '9109.58074'],
  ['12.517', '1504.2745', '2.0628', '0.0702', '7E-6', '7499.84903', '8609.39685'],
  ['12.556', '1470.1869', '1.9124', '0.0141', '1.4E-6', '7447.12404', '8169.15173'],
  ['12.596', '1470.0252', '0.5036', '0.0958', '9.6E-6', '7486.8162', '7851.66551'],
  ['12.636', '1474.7299', '1.4796', '0.1152', '9.9E-6', '7494.35901', '7969.24774'],
  ['12.676', '1477.63', '1.4039', '0.0646', '5E-6', '7486.80192', '7304.4053'],
  ['12.715', '1504.2737', '1.993', '0.0469', '4.7E-6', '7454.97416', '8121.69765'],
  ['12.755', '1479.7964', '1.5049', '0.03015', '3E-6', '7478.21795', '11173.60002'],
  ['12.795', '1479.7382', '0.59', '0.0338', '3.4E-6', '7502.53494', '8855.638'],
  ['12.835', '1477.5091', '1.509', '0.0235', '2.4E-6', '-2000', '8291.32478'],
  ['12.874', '1492.1347', '1.1804', '0.0274', '2.7E-6', '7474.75702', '8377.15619'],
  ['12.914', '1484.6885', '0.6997', '0.0361', '3.6E-6', '7498.34688', '8995.71195'],
]

function Sheet() {
  const head = 'border-r border-b border-black bg-[#dfdfe4] font-normal'
  const side = 'border-r border-b border-black bg-[#dddde0] pr-2 pb-[3px] text-right font-normal'
  const cell = 'border-r border-b border-[#bdbdbd] pb-[3px]'
  return (
    <table className="h-[686px] w-[1076px] shrink-0 table-fixed border-separate border-spacing-0 font-['Noto_Sans_Mono_CJK_SC','Liberation_Mono',monospace] text-[18px] leading-5 text-[#111]">
      <colgroup>
        <col className="w-[71px]" />
        <col className="w-[337px]" />
        <col className="w-[109px]" />
        <col className="w-[109px]" />
        <col className="w-[109px]" />
        <col className="w-[108px]" />
        <col className="w-[117px]" />
        <col className="w-[116px]" />
      </colgroup>
      <thead>
        <tr className="h-9">
          <th className={head} aria-label="all" />
          <th className={head}>A(Y)</th>
          {columns.map((c) => (
            <th key={c.name} className={head}>{c.name}</th>
          ))}
        </tr>
      </thead>
      <tbody>
        <tr className="h-6 bg-[#ffffc2] text-center">
          <th className={side} aria-label="long name" />
          <td className={cell} />
          {columns.map((c) => (
            <td key={c.name} className={cell}>{c.long}</td>
          ))}
        </tr>
        <tr className="h-6 bg-[#fefdbf] text-center">
          <th className={side} aria-label="units" />
          <td className={cell} />
          {columns.map((c) => (
            <td key={c.name} className={cell}>mv</td>
          ))}
        </tr>
        {['bg-[#fcf9c6]', 'bg-[#f2f2ac]'].map((tone) => (
          <tr key={tone} className={clsx('h-6', tone)}>
            <th className={side} aria-label="comments" />
            <td className={cell} />
            {columns.map((c) => (
              <td key={c.name} className={cell} />
            ))}
          </tr>
        ))}
        {rows.map(([time, ...values], i) => (
          <tr key={time} className="h-6 bg-white text-right">
            <th className={side}>{i + 1}</th>
            <td className={clsx(cell, 'pr-1.5')}>2019-02-12 04:10:{time}</td>
            {values.map((v, n) => (
              <td key={n} className={clsx(cell, 'pr-1.5')}>{v}</td>
            ))}
          </tr>
        ))}
      </tbody>
    </table>
  )
}

const menuItems = [
  '数据源...', '选择...', '|', '导入', '自动导入', '|', '断连工作表', '删除数据连接器...', '|', '保存时清除导入数据', '通用数据路径 (未定义)...',
]

function ContextMenu() {
  return (
    <div role="menu" className="absolute top-16 left-[27px] flex w-[302px] flex-col border border-[#8a8a8a] bg-[#fcfcfc] pb-1 shadow-[4px_4px_4px_rgba(0,0,0,0.35)]">
      {menuItems.map((item, i) => {
        const lit = i === 8 || i === 9
        const gutter = clsx('h-full w-[38px] shrink-0 border-r', lit ? 'border-transparent' : 'border-[#e0e0e0] bg-[#f1f1f1]')
        if (item === '|') {
          return (
            <div key={i} className="relative flex h-[13px] items-center">
              {lit && <span className="absolute top-0 -left-1 h-[46px] w-[293px] bg-[#f8fb00]" />}
              <span className={gutter} />
              <span className="relative ml-3.5 grow border-t border-[#b4b4b4]" />
            </div>
          )
        }
        return (
          <button key={i} type="button" role="menuitem" className="relative flex h-[33px] items-center text-left">
            <span className={clsx(gutter, 'flex items-center justify-center')}>
              {i === 9 && (
                <span className="flex size-7 items-center justify-center border-2 border-[#6f9a10] bg-[#d3e400]">
                  <svg viewBox="0 0 12 12" className="size-3" fill="none" stroke="#111" strokeWidth="2">
                    <path d="M1 6l3 4 7-9" />
                  </svg>
                </span>
              )}
            </span>
            <span className="ml-2 grow">{item}</span>
            {item === '自动导入' && (
              <svg viewBox="0 0 6 12" className="mr-1.5 h-3 w-1.5">
                <path d="M0 0l6 6-6 6z" />
              </svg>
            )}
          </button>
        )
      })}
    </div>
  )
}

function SizeGrip() {
  return (
    <svg viewBox="0 0 26 26" className="h-[26px] w-[26px] shrink-0" aria-hidden="true">
      <path d="M16 20h3v3h-3zM21 20h3v3h-3zM11 20h3v3h-3zM16 15h3v3h-3zM21 15h3v3h-3zM21 10h3v3h-3z" fill="#c2c2c2" />
    </svg>
  )
}

function BookWindow() {
  const control = 'flex h-[26px] w-12 items-center justify-center rounded-sm border'
  const chevron = 'size-3.5'
  return (
    <section className="absolute top-[33px] left-[30px] flex h-[770px] w-[1475px] flex-col rounded-t-lg border-2 border-[#1d2c38] bg-[#bbd2ec] px-3 pb-2.5">
      <header className="-mx-3 flex h-[45px] items-center rounded-t-md border-t border-white bg-linear-to-b from-[#9db7d0] to-[#bccfec] px-3 pt-2">
        <svg viewBox="0 0 16 16" className="size-6" fill="none" aria-hidden="true">
          <path d="M.5 .5h15v15h-15z" fill="#fff" stroke="#222" />
          <path d="M1 4h14v4h-14zM1 11h14v4h-14z" fill="#5fd98a" />
          <path d="M.5 4.5h15M.5 8h15M.5 11.5h15M5.5 0v16M10.5 0v16" stroke="#225" />
          <path d="M2 2.5h2M7 2.5h2M12 2.5h2" stroke="#d22" />
        </svg>
        <h2 className="ml-2 grow text-[18px] text-[#26364d]">Book1</h2>
        <div className="flex gap-1">
          <button type="button" aria-label="Minimize" className={clsx(control, 'border-[#587a9e] bg-linear-to-b from-[#c3d7ee] from-50% to-[#9fbbd8] to-50%')}>
            <span className="mt-2 h-2 w-4 rounded-xs border border-[#445] bg-white" />
          </button>
          <button type="button" aria-label="Maximize" className={clsx(control, 'border-[#587a9e] bg-linear-to-b from-[#c3d7ee] from-50% to-[#9fbbd8] to-50%')}>
            <span className="flex h-3.5 w-4 items-center justify-center rounded-xs border border-[#445] bg-white">
              <span className="h-1.5 w-2 border border-[#445]" />
            </span>
          </button>
          <button type="button" aria-label="Close" className={clsx(control, 'border-[#5a1420] bg-linear-to-b from-[#e09488] from-50% to-[#c03a2b] to-50%')}>
            <svg viewBox="0 0 14 12" className="h-3 w-3.5" stroke="#fff" strokeWidth="3.5">
              <path d="M2 1l10 10M12 1L2 11" />
            </svg>
          </button>
        </div>
      </header>

      <div className="flex min-h-0 grow flex-col border-t-2 border-[#6d7684] bg-[#f0f0f0]">
        <div className="flex min-h-0 grow">
          <div className="flex min-w-0 grow items-start overflow-hidden bg-[#e1e1e6]">
            <Sheet />
          </div>
          <div className="flex w-[25px] flex-col items-center bg-[#f0f0f0] pr-0.5">
            <svg viewBox="0 0 14 14" className={clsx(chevron, 'mt-2 shrink-0')} fill="none" stroke="#555" strokeWidth="3">
              <path d="M2 10l5-5 5 5" />
            </svg>
            <span className="mt-1 h-[26px] w-[22px] bg-[#cdcdcd]" />
            <span className="grow" />
            <svg viewBox="0 0 14 14" className={clsx(chevron, 'mb-2 shrink-0')} fill="none" stroke="#555" strokeWidth="3">
              <path d="M2 4l5 5 5-5" />
            </svg>
            <span className="h-2.5 w-full border-y-2 border-[#333] bg-white" />
          </div>
        </div>

        <div className="flex h-7 shrink-0 items-stretch border-b-2 border-white">
          <div className="flex items-center">
            {['M8 1L2 6l6 5z', 'M2 1l6 5-6 5z'].map((d) => (
              <button key={d} type="button" aria-label="scroll tabs" className="flex h-6 w-[26px] items-center justify-center border border-[#999] bg-[#f6f6f6]">
                <svg viewBox="0 0 10 12" className="h-3 w-2.5">
                  <path d={d} fill="#555" />
                </svg>
              </button>
            ))}
          </div>
          <div className="flex grow items-stretch bg-[#c6c6c6]">
            <svg viewBox="0 0 12 26" className="h-[26px] w-3 bg-[#e9e9ec]">
              <path d="M2 0h10v26z" fill="#fff" />
              <path d="M2 0l9 26" stroke="#111" strokeWidth="2" />
            </svg>
            <button type="button" className="bg-white px-1.5 font-['Liberation_Sans',sans-serif] text-[17px] font-bold">
              Multichannels
            </button>
            <svg viewBox="0 0 12 26" className="h-[26px] w-3">
              <path d="M0 0h12l-10 26h-2z" fill="#fff" />
              <path d="M11 0L1 26" stroke="#111" strokeWidth="2" />
            </svg>
            <span className="grow border-t-2 border-r-2 border-[#444]" />
          </div>
          <div className="flex w-[442px] items-center gap-1.5 border-l-4 border-white bg-[#f0f0f0] pl-1.5">
            <svg viewBox="0 0 14 14" className={chevron} fill="none" stroke="#555" strokeWidth="3">
              <path d="M10 2L5 7l5 5" />
            </svg>
            <span className="h-[23px] grow bg-[#cdcdcd]" />
            <svg viewBox="0 0 14 14" className={chevron} fill="none" stroke="#555" strokeWidth="3">
              <path d="M4 2l5 5-5 5" />
            </svg>
            <span className="h-full w-2.5 border-x-2 border-[#333] bg-white" />
          </div>
          <SizeGrip />
        </div>
      </div>

      {/* data connector badge with the pointer over it */}
      <svg viewBox="0 0 40 48" className="absolute top-[49px] left-[13px] z-10 h-12 w-10" aria-hidden="true">
        <path d="M1 14V1h8l2 3h9v10z" fill="#0d0" stroke="#063" />
        <path d="M22 9h3v5" stroke="#33a" fill="none" />
        <path d="M15 44l-7-12c-2-4 2-5 3-3l3 4V18c0-3 4-3 4 0v8c1-2 4-2 4 0 1-2 4-2 4 1 1-2 4-1 4 1v9l-3 7z" fill="#fff" stroke="#111" strokeWidth="2" />
        <path d="M18 26v6M22 27v5M26 28v4" stroke="#111" />
      </svg>
      <ContextMenu />
    </section>
  )
}

function SideTab({ label, className }: { label: string; className: string }) {
  return (
    <button
      type="button"
      className={clsx(
        "w-full border-b border-[#dcd9e6] bg-[#f7f5f7] pr-2 text-left font-['Noto_Sans_Mono_CJK_SC','Noto_Sans_CJK_SC',sans-serif] text-[18px] leading-5 text-[#555] [text-orientation:sideways] [writing-mode:vertical-rl]",
        className
      )}
    >
      {label}
    </button>
  )
}

function VerticalBar({ items, className }: { items: string[]; className?: string }) {
  return (
    <div className={clsx('flex shrink-0 flex-col rounded-r-sm bg-linear-to-r from-[#fcfcff] via-[#ebeaf3] to-[#b4b3c6]', className)}>
      <Grip vertical />
      <Tools vertical items={items} />
    </div>
  )
}

function VerticalOverflow({ more = false }: { more?: boolean }) {
  return (
    <button type="button" aria-label="toolbar options" className="flex h-6 shrink-0 items-center justify-end rounded-b-md bg-linear-to-r from-[#f3f2fb] to-[#c3c2d0] pr-1">
      <svg viewBox="0 0 28 10" className="h-2.5 w-7" aria-hidden="true">
        {more && <path d="M1 0l3 4 3-4zM1 5l3 4 3-4z" />}
        <path d="M17 0h2v10h-2zM21 0l6 5-6 5z" />
      </svg>
    </button>
  )
}

export default function App() {
  return (
    <div className="relative flex h-screen overflow-hidden bg-black font-['Open_Sans','Noto_Sans_CJK_SC',sans-serif] text-xl leading-6 text-[#111]">
      <aside className="w-[217px] shrink-0" />

      <main className="flex min-w-0 grow flex-col border-r-2 border-l border-[#3f8fcf] bg-[#f1effc]">
        <header className="flex h-[43px] shrink-0 items-center bg-white pr-7 pb-1 pl-3">
          <svg viewBox="0 0 24 24" className="size-6" fill="none" aria-hidden="true">
            <path d="M8 1h15v17h-15z" fill="#e4eaf0" stroke="#667" />
            <circle cx="10" cy="13" r="9.5" fill="#e0574b" stroke="#a33" />
            <path d="M5 18L14 8M9 8h5v5M5 18v-5" stroke="#fff" strokeWidth="2" />
          </svg>
          <h1 className="ml-2 grow text-[17px]">multi_channel.opju - D:\Data\ - /Folder1/ - OriginPro 2020 64-bit</h1>
          <div className="flex items-center gap-[52px]">
            <button type="button" aria-label="Minimize">
              <svg viewBox="0 0 16 16" className="size-4" fill="none" stroke="#111" strokeWidth="1.5"><path d="M0 9h16" /></svg>
            </button>
            <button type="button" aria-label="Maximize">
              <svg viewBox="0 0 16 16" className="size-4" fill="none" stroke="#111" strokeWidth="1.5"><path d="M1 1h14v14H1z" /></svg>
            </button>
            <button type="button" aria-label="Close">
              <svg viewBox="0 0 16 16" className="size-4" fill="none" stroke="#111" strokeWidth="1.5"><path d="M0 0l16 16M16 0L0 16" /></svg>
            </button>
          </div>
        </header>

        <nav className="flex h-9 shrink-0 items-center bg-[#f1effc] pb-0.5">
          <Grip />
          <ul className="flex gap-[22px] pl-2">
            {menus.map(([label, key]) => (
              <li key={key}>
                <button type="button" className="whitespace-pre">
                  {label}
                  <span className="text-base">(<u>{key}</u>)</span>
                </button>
              </li>
            ))}
          </ul>
        </nav>

        <div className="flex h-[39px] shrink-0 pb-px">
          <Segment>
            <Tools items={['newProject', 'newFolder', 'newBook', 'newGraph', 'newMatrix', 'newFunction>', 'newLayout', 'newNotes', 'newImage', '|', 'open', 'openTemplate', 'save', 'saveTemplate', '|', 'run', '|']} />
            <span className="relative mr-0.5 ml-1 flex h-7 w-[86px] shrink-0 items-center bg-white">
              <select aria-label="zoom" className="w-full appearance-none bg-transparent px-1 text-[17px] leading-5">
                <option>100%</option>
              </select>
              <span className="pointer-events-none absolute right-0 flex h-7 w-5 items-center justify-center bg-[#d9d8e4]">
                <Caret />
              </span>
            </span>
            <Tools items={['|', 'print', 'slide', 'project', 'video', '|', 'codeBuilder', 'tiles', 'duplicate', '|', 'tree', '|', 'zoomSheet', 'zoomGraph', 'results', 'script', 'gear', '|', 'addColumn']} />
          </Segment>
          <Segment>
            <Tools items={['sumColumns', 'sumRows', 'sort', '|', 'rowNumbers', '|', 'sortAsc', 'histogram', 'floating', '|', 'filter', 'filterOff', 'filterRefresh']} />
          </Segment>
          <Segment more>
            <Tools items={['addPlot', '|', 'setX', 'setY', 'setZ', 'yError', 'none', '|', 'moveFirst']} />
            <span className="w-1" />
          </Segment>
          <Segment more grow />
        </div>

        <div className="flex h-[39px] shrink-0">
          <Segment>
            <Tools items={['cut', 'copy', 'paste']} />
          </Segment>
          <Segment>
            <Tools items={['importWizard', 'importAscii', 'importMultiple', 'importExcel', '|', 'reimport', 'recalc', 'cloneImport', '|', 'batch']} />
          </Segment>
          <Segment>
            <span className="relative mr-2 flex h-7 w-[190px] shrink-0 items-center border border-[#adadb5] bg-[#f7f7f7] pl-2">
              <span className="font-['Liberation_Serif',serif] text-[19px] font-bold" aria-hidden="true">
                <span className="text-[#999]">T</span>
                <span className="-ml-1.5">T</span>
              </span>
              <select aria-label="font" className="h-full grow appearance-none bg-transparent pl-2 text-[#808080]">
                <option>默认: 宋体</option>
              </select>
              <span className="pointer-events-none absolute right-1">
                <Caret dim />
              </span>
            </span>
            <Combo label="font size" value="0" className="mr-1 w-[87px]" />
            <Tools items={['bold', 'italic', 'underline', 'superscript', 'subscript', 'supersub', 'greek', 'fontUp', 'fontDown', 'alignText>', 'bars>']} />
            <span className="w-1" />
            <Tools items={['fontColor>']} />
            <span className="w-1" />
          </Segment>
          <Segment more>
            <span className="flex gap-2">
              <span className="flex items-center"><Tools items={['fillColor>']} /></span>
              <span className="flex items-center"><Tools items={['patternColor>']} /></span>
              <span className="flex items-center"><Tools items={['lineColor>']} /></span>
            </span>
            <Tools items={['light']} />
            <span className="relative mx-1 flex h-7 w-[86px] shrink-0 items-center border border-[#adadb5] bg-white px-1.5">
              <span className="w-12 border-t-2 border-black" />
              <span className="absolute right-1"><Caret dim /></span>
            </span>
            <Combo label="line width" value="0" className="mr-2 ml-1 w-[87px]" />
            <span className="h-6 w-[54px] border-2 border-white bg-[#dddce6] outline outline-[#b5b4c2]" />
            <span className="mr-2 ml-1.5"><Caret dim /></span>
            <Combo label="pattern width" value="0" className="mr-0.5 w-[87px]" />
            <Tools items={['border>']} />
            <span className="w-2" />
          </Segment>
          <Segment more grow />
        </div>

        <div className="flex min-h-0 grow">
          <div className="flex w-[29px] shrink-0 flex-col pt-1">
            <SideTab label="项目管理器 (1)" className="h-[172px] pt-2" />
            <SideTab label="消息日志" className="h-[136px] pt-7" />
            <SideTab label="提示日志" className="h-[136px] pt-7" />
          </div>

          <div className="ml-0.5 flex w-14 shrink-0 flex-col border-l border-[#c9c8d6]">
            <VerticalBar
              className="w-[52px]"
              items={['pointer', 'zoomIn', 'zoomOut', 'reader', 'target>', 'dataCursor', 'region>', 'maskPoints>', 'dots', 'text', 'regionBox', 'arrowTool>', 'line>', 'rect>', 'hand', 'equation>', 'insertGraph>', 'rescale', 'rotate3d']}
            />
            <div className="flex w-[52px] flex-col pt-0.5">
              <VerticalOverflow />
            </div>
            <VerticalBar className="w-[38px] grow" items={['layers', 'rings', 'legend', 'asterisk', 'grid']} />
            <div className="flex w-[52px] flex-col">
              <VerticalOverflow more />
            </div>
          </div>

          <div className="flex min-w-0 grow flex-col">
            <div className="relative min-h-0 grow overflow-hidden border-t-2 border-l-2 border-[#77767f] bg-[#ababab]">
              <BookWindow />
            </div>
            <div className="flex h-[43px] shrink-0 border-t-2 border-white">
              <Segment>
                <Tools items={['linePlot>', 'scatter>', 'lineSymbol>', 'columnPlot>', 'multiPlot>', 'boxPlot>', 'areaPlot>', 'polar>', 'stock>', 'template']} />
              </Segment>
              <Segment>
                <Tools items={['wall3d>', '|', 'surface>', 'scatter3d>', 'contour>', 'profile>', 'blank']} />
              </Segment>
              <Segment>
                <Tools items={['rotL', 'rotR', 'tiltL', 'tiltR', 'tiltUp', 'tiltDown', 'widen', 'overlap', 'expand', 'cubeAxes', 'cubeFrame']} />
                <Combo label="angle" value="10" className="w-[88px]" />
              </Segment>
              <Segment>
                <Tools items={['maskA', 'maskB', '|', 'maskC', 'maskD', 'maskD', '|', 'maskRange']} />
              </Segment>
            </div>
          </div>

          <div className="ml-1 flex w-9 shrink-0 flex-col">
            <VerticalBar items={['stairs', 'axes3d', 'axes2', 'axes1', 'swapXY', 'speed', '|', 'layer1', 'layer4', 'lockedMerge', 'extract', '|', 'frameL', 'frameT', 'frameR', 'frameB', 'frameC', 'frameD']} />
            <VerticalOverflow />
            <VerticalBar className="grow" items={['alignL', 'alignR', '|', 'alignT', 'alignB', '|', 'alignV', 'alignH', '|', 'distribute']} />
            <VerticalOverflow more />
          </div>

          <div className="ml-1.5 flex w-7 shrink-0 flex-col">
            <SideTab label="Apps" className="h-[84px] pt-3" />
            <SideTab label="对象管理器" className="h-[155px] pt-7" />
          </div>
        </div>

        <footer className="flex h-[27px] shrink-0 items-center border-t border-[#d9d8e2] bg-[#f2f1f4] pt-1 pl-[54px] whitespace-pre">
          <span className="grow">
            <span className="mr-2 text-base">&lt;&lt;</span>
            <span>【开始】菜单 </span>
            <span className="text-[17px]">(F1)</span>
          </span>
          <span className="w-[318px] border-l border-[#dcdce2] pl-2 text-[19px]">平均值=0 求和=0 计数=0 最小值=--</span>
          <span className="w-[88px] border-l border-[#dcdce2] pl-3 text-[18px]">AU : 开</span>
          <span className="w-[206px] border-l border-[#dcdce2] pl-2 text-[17px]">1: [Book1]Multichannels!</span>
          <span className="border-l border-[#dcdce2] pl-1">弧度</span>
          <SizeGrip />
        </footer>
      </main>

      <aside className="w-[250px] shrink-0" />

      <svg viewBox="0 0 44 44" className="absolute bottom-[-3px] left-[222px] size-11" fill="none" aria-hidden="true">
        <circle cx="22" cy="22" r="21" fill="#e4675a" stroke="#c9463c" />
        <circle cx="22" cy="13" r="11" fill="#ee9186" />
        <path d="M14 33l6-6 4-14 5 6 6-9" stroke="#3a6a8a" />
      </svg>

      <p className="pointer-events-none absolute bottom-2 left-5 flex items-end gap-3 text-[33px] leading-10 font-light whitespace-pre text-white/30">
        <svg viewBox="0 0 96 44" className="mb-2 h-11 w-24" fill="currentColor" aria-label="bilibili">
          <path d="M1 2l6-1 3 22c10-2 14 3 14 8 0 8-8 12-19 11zM9 28l1 9c5-1 8-4 7-7-1-2-4-3-8-2zM26 16l4-1 2 27h-4zM33 6l4-1 3 37h-4zM42 16l4-1 2 27h-4zM26 8l3 0 1 5-3 0zM42 8l3 0 1 5-3 0z" fillRule="evenodd" />
          <path d="M50 2l6-1 3 22c10-2 14 3 14 8 0 8-8 12-19 11zM58 28l1 9c5-1 8-4 7-7-1-2-4-3-8-2zM75 16l4-1 2 27h-4zM82 6l4-1 3 37h-4zM90 16l4-1 1 27h-4zM75 8l3 0 1 5-3 0zM90 8l3 0 1 5-3 0z" fillRule="evenodd" />
        </svg>
        BV1f7411T7mP P6 00:01:18/00:03:11
      </p>
      <a href="https://blog.csdn.net/Temmie1024" className="absolute right-2.5 bottom-2 font-['Liberation_Sans',sans-serif] text-base text-[#b4b4b4]">
        https://blog.csdn.net/Temmie1024
      </a>
    </div>
  )
}
